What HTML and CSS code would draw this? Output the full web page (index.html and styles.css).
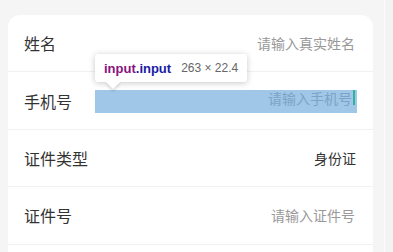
FILE: index.html
```html
<!DOCTYPE html>
<html lang="zh-CN">
<head>
<meta charset="utf-8">
<title>表单</title>
<link rel="stylesheet" href="styles.css">
</head>
<body>
<div class="page">
  <div class="card">
    <div class="row">
      <div class="label">姓名</div>
      <div class="value placeholder">请输入真实姓名</div>
    </div>
    <div class="row">
      <div class="label">手机号</div>
      <div class="field">
        <input class="input" type="text" placeholder="请输入手机号">
        <span class="caret"></span>
        <div class="tip">
          <span class="tip-tag">input</span><span class="tip-cls">.input</span>
          <span class="tip-dim">263 × 22.4</span>
          <span class="tip-arrow"></span>
        </div>
      </div>
    </div>
    <div class="row">
      <div class="label">证件类型</div>
      <div class="value">身份证</div>
    </div>
    <div class="row">
      <div class="label">证件号</div>
      <div class="value placeholder">请输入证件号</div>
    </div>
    <div class="rest"></div>
  </div>
</div>
<div class="scrollbar"></div>
</body>
</html>
```

FILE: styles.css
```css
html, body {
  margin: 0;
  padding: 0;
  background: #f5f5f5;
  font-family: "Noto Sans CJK SC", "Noto Sans", sans-serif;
  overflow: hidden;
}

.page {
  padding: 15px 0 0 8px;
}

.card {
  width: 365px;
  background: #ffffff;
  border-radius: 12px;
}

.row {
  display: flex;
  align-items: center;
  height: 56.4px;
  padding: 0 16px;
  border-bottom: 1px solid #f1f1f1;
}

.label {
  width: 71px;
  flex: none;
  font-size: 16px;
  color: #333333;
}

.value {
  flex: 1;
  text-align: right;
  font-size: 14px;
  color: #333333;
  padding-right: 1px;
}

.value.placeholder {
  color: #999999;
  padding-right: 2px;
}

.field {
  position: relative;
  flex: 1;
  height: 22.4px;
  margin-top: 2px;
}

.input {
  display: block;
  width: 100%;
  height: 22.4px;
  box-sizing: border-box;
  margin: 0;
  border: none;
  outline: none;
  padding: 0 5px 6.4px 0;
  line-height: 16px;
  font-family: "Noto Sans CJK SC", "Noto Sans", sans-serif;
  font-size: 14px;
  text-align: right;
  background: #a0c6e8;
  color: #333333;
}

.input::placeholder {
  color: #7da3c5;
}

.caret {
  position: absolute;
  right: 2px;
  top: 0;
  width: 2px;
  height: 15px;
  background: #2fb39e;
}

.tip {
  position: absolute;
  left: 0;
  bottom: calc(100% + 8px);
  height: 28px;
  display: flex;
  align-items: center;
  padding: 0 9px;
  background: #ffffff;
  border-radius: 3px;
  box-shadow: 0 1px 6px rgba(0, 0, 0, 0.22);
  font-family: "Liberation Sans", Arial, sans-serif;
  white-space: nowrap;
}

.tip-tag {
  font-size: 13px;
  font-weight: bold;
  color: #881280;
}

.tip-cls {
  font-size: 13px;
  font-weight: bold;
  color: #1a1aa6;
}

.tip-dim {
  margin-left: 10px;
  font-size: 12px;
  color: #666666;
}

.tip-arrow {
  position: absolute;
  left: 13px;
  bottom: -5px;
  width: 10px;
  height: 10px;
  background: #ffffff;
  transform: rotate(45deg);
  box-shadow: 2px 2px 3px rgba(0, 0, 0, 0.12);
}

.rest {
  height: 40px;
}

.scrollbar {
  position: fixed;
  top: 0;
  right: 0;
  bottom: 0;
  width: 8px;
  background: #f3f3f3;
  border-left: 1px solid #fbfbfb;
}
```
